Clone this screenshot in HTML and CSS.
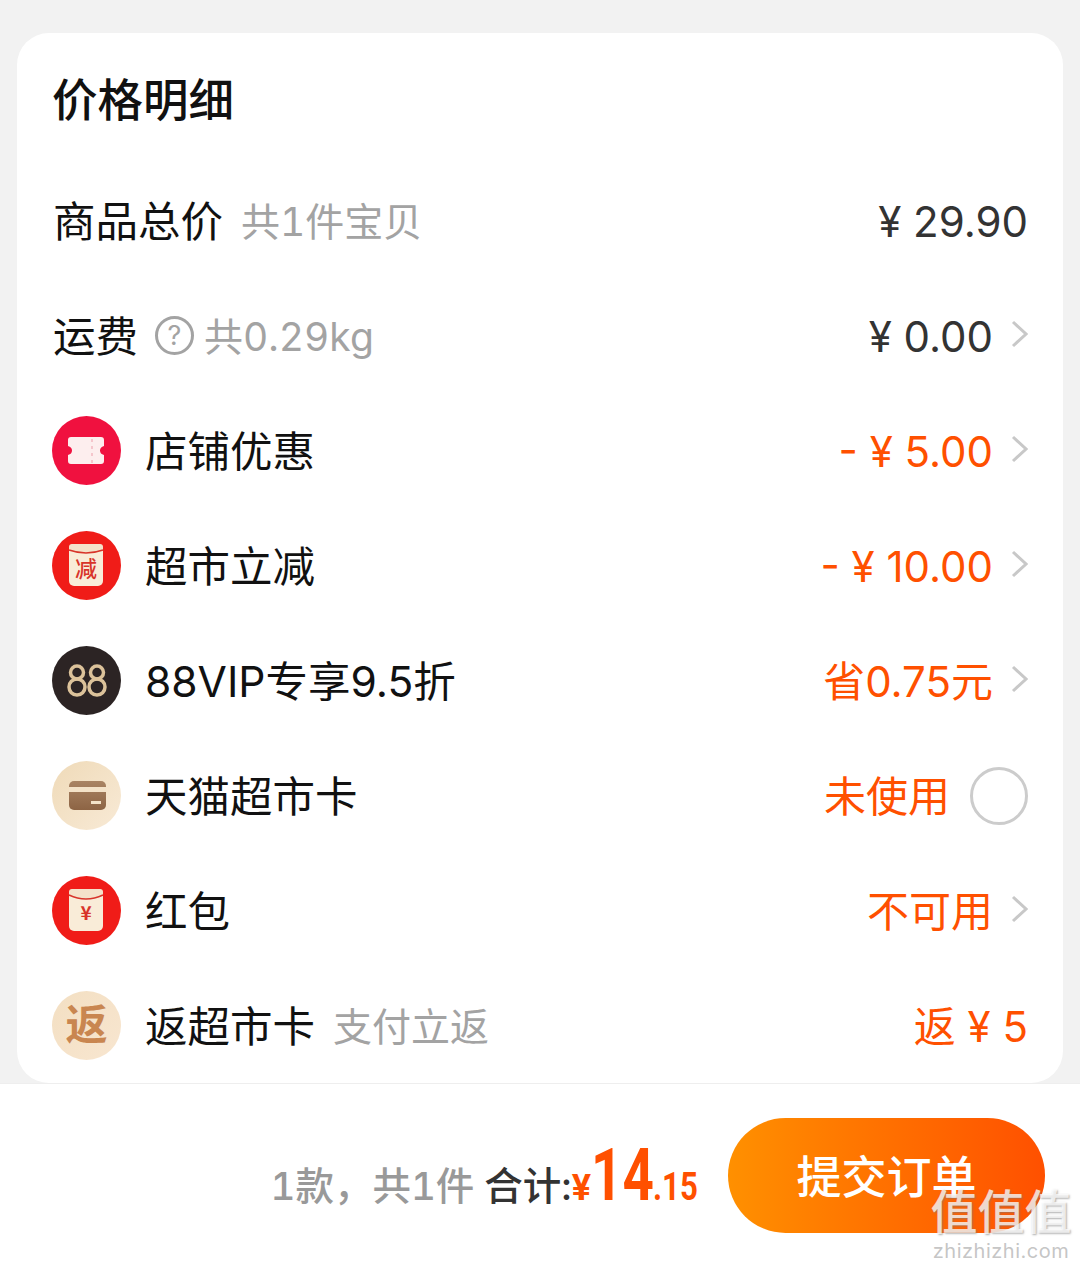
FILE: index.html
```html
<!DOCTYPE html>
<html lang="zh-CN">
<head>
  <meta charset="UTF-8">
  <meta name="viewport" content="width=device-width, initial-scale=1.0">
  <title>价格明细</title>
  <link rel="stylesheet" href="styles.css">
</head>
<body>
  <div class="page">
    <div class="card">
      <h3 class="card-title">价格明细</h3>

      <div class="row">
        <div class="row-left">
          <span class="label">商品总价</span>
          <span class="sub sub-wide">共1件宝贝</span>
        </div>
        <div class="value">¥ 29.90</div>
      </div>

      <div class="row">
        <div class="row-left">
          <span class="label">运费</span>
          <span class="help">?</span>
          <span class="sub sub-tight">共0.29kg</span>
        </div>
        <div class="value">¥ 0.00</div>
        <svg class="chevron" viewBox="0 0 17 28"><path d="M2 2L15 14L2 26"/></svg>
      </div>

      <div class="row">
        <div class="row-left">
          <svg class="icon" viewBox="0 0 69 69">
            <circle cx="34.5" cy="34.5" r="34.5" fill="#f0113f"/>
            <path d="M19 21H49Q52 21 52 24V30Q48 31 48 34.500Q48 38 52 39V45Q52 48 49 48H19Q16 48 16 45V39Q20 38 20 34.500Q20 31 16 30V24Q16 21 19 21Z" fill="#fdeeee"/>
            <path d="M40 23V47" stroke="#f5c6cc" stroke-width="2" stroke-dasharray="3 4"/>
          </svg>
          <span class="label">店铺优惠</span>
        </div>
        <div class="value orange">- ¥ 5.00</div>
        <svg class="chevron" viewBox="0 0 17 28"><path d="M2 2L15 14L2 26"/></svg>
      </div>

      <div class="row">
        <div class="row-left">
          <svg class="icon" viewBox="0 0 69 69">
            <circle cx="34.5" cy="34.5" r="34.5" fill="#f01c18"/>
            <rect x="17" y="13" width="34" height="42" rx="5" fill="#f9ecd8"/>
            <path d="M17 19Q34 25 51 19V16Q51 13 48 13H20Q17 13 17 16Z" fill="#f4e2ca"/>
            <path d="M17 19Q34 25 51 19" fill="none" stroke="#d8342a" stroke-width="1.500"/>
            <text class="icon-char" x="34" y="46" font-size="22" font-weight="500">减</text>
          </svg>
          <span class="label">超市立减</span>
        </div>
        <div class="value orange">- ¥ 10.00</div>
        <svg class="chevron" viewBox="0 0 17 28"><path d="M2 2L15 14L2 26"/></svg>
      </div>

      <div class="row">
        <div class="row-left">
          <svg class="icon" viewBox="0 0 69 69">
            <circle cx="34.5" cy="34.5" r="34.5" fill="#2c2424"/>
            <g fill="none" stroke="#dcc29a" stroke-width="3.500">
              <circle cx="25" cy="26.500" r="6.500"/>
              <circle cx="25" cy="41" r="8"/>
              <circle cx="45" cy="26.500" r="6.500"/>
              <circle cx="45" cy="41" r="8"/>
            </g>
          </svg>
          <span class="label">88VIP专享9.5折</span>
        </div>
        <div class="value orange">省0.75元</div>
        <svg class="chevron" viewBox="0 0 17 28"><path d="M2 2L15 14L2 26"/></svg>
      </div>

      <div class="row">
        <div class="row-left">
          <svg class="icon" viewBox="0 0 69 69">
            <defs>
              <linearGradient id="sand" x1="0" y1="0" x2="1" y2="1">
                <stop offset="0" stop-color="#efdab8"/>
                <stop offset="1" stop-color="#f8ead6"/>
              </linearGradient>
              <linearGradient id="wallet" x1="0" y1="0" x2="0" y2="1">
                <stop offset="0" stop-color="#a98464"/>
                <stop offset="1" stop-color="#8d6444"/>
              </linearGradient>
            </defs>
            <circle cx="34.5" cy="34.5" r="34.5" fill="url(#sand)"/>
            <rect x="17" y="20" width="37" height="29" rx="5" fill="url(#wallet)"/>
            <rect x="17" y="26" width="37" height="5" fill="#f3e2c8"/>
            <rect x="39" y="40" width="10" height="3" fill="#f3e2c8"/>
          </svg>
          <span class="label">天猫超市卡</span>
        </div>
        <div class="value orange">未使用</div>
        <span class="radio"></span>
      </div>

      <div class="row">
        <div class="row-left">
          <svg class="icon" viewBox="0 0 69 69">
            <circle cx="34.5" cy="34.5" r="34.5" fill="#f01c18"/>
            <rect x="17" y="13" width="34" height="42" rx="5" fill="#f9ecd8"/>
            <path d="M17 19Q34 27 51 19V16Q51 13 48 13H20Q17 13 17 16Z" fill="#f4e2ca"/>
            <path d="M17 19Q34 27 51 19" fill="none" stroke="#d8342a" stroke-width="1.500"/>
            <text class="icon-char" x="34" y="44" font-size="19" font-weight="700">¥</text>
          </svg>
          <span class="label">红包</span>
        </div>
        <div class="value orange">不可用</div>
        <svg class="chevron" viewBox="0 0 17 28"><path d="M2 2L15 14L2 26"/></svg>
      </div>

      <div class="row">
        <div class="row-left">
          <div class="icon icon-return">返</div>
          <span class="label">返超市卡</span>
          <span class="sub sub-wide">支付立返</span>
        </div>
        <div class="value orange">返 ¥ 5</div>
      </div>
    </div>

    <div class="footer">
      <div class="totals">
        <span class="count">1款，共1件</span>
        <span class="total-label">合计:</span>
        <span class="price-sign">¥</span>
        <span class="price-big">14</span>
        <span class="price-small">.15</span>
      </div>
      <div class="submit">提交订单</div>
    </div>

    <div class="watermark">
      <div class="watermark-mark">值值值</div>
      <div class="watermark-url">zhizhizhi.com</div>
    </div>
  </div>
</body>
</html>
```

FILE: styles.css
```css
* {
  box-sizing: border-box;
}

body {
  margin: 0;
  background-color: #f2f2f2;
  font-family: Inter, "Noto Sans CJK SC", sans-serif;
  color: #111;
}

.page {
  position: relative;
  width: 1080px;
  height: 1269px;
  padding-top: 33px;
  overflow: hidden;
}

.card {
  height: 1050px;
  margin: 0 17px;
  padding: 0 35px;
  background-color: #fff;
  border-radius: 32px;
  overflow: hidden;
}

.card-title {
  height: 130px;
  margin: 0;
  font-size: 45.5px;
  font-weight: 500;
  line-height: 136px;
}

.row {
  display: flex;
  align-items: center;
  height: 115px;
}

.row-left {
  display: flex;
  align-items: center;
  flex-grow: 1;
}

.row-left > .label:first-child {
  margin-left: 1px;
}

.icon {
  width: 69px;
  height: 69px;
  flex-shrink: 0;
  margin-right: 24px;
}

.icon-char {
  font-family: "Noto Sans CJK SC", sans-serif;
  text-anchor: middle;
  fill: #d8342a;
}

.icon-return {
  border-radius: 50%;
  background: linear-gradient(135deg, #f3dfc2, #f8e6d0);
  color: #c98650;
  font-size: 42px;
  font-weight: 700;
  line-height: 67px;
  text-align: center;
}

.label {
  padding-top: 2px;
  font-size: 42.5px;
  line-height: 56px;
}

.sub {
  padding-top: 2px;
  font-size: 39px;
  font-variant-numeric: tabular-nums;
  line-height: 56px;
  color: #a3a3a3;
}

.sub-wide {
  margin-left: 18px;
}

.sub-tight {
  margin-left: 10px;
}

.help {
  width: 39px;
  height: 39px;
  margin-left: 17px;
  border: 3px solid #a3a3a3;
  border-radius: 50%;
  color: #a3a3a3;
  font-size: 27px;
  line-height: 33px;
  text-align: center;
}

.value {
  padding-top: 2px;
  font-size: 42px;
  line-height: 56px;
  color: #333;
  white-space: nowrap;
}

.orange {
  color: #ff5000;
}

.chevron {
  width: 17px;
  height: 28px;
  margin-left: 18px;
  flex-shrink: 0;
  margin-top: -3px;
}

.chevron path {
  fill: none;
  stroke: #c8c8c8;
  stroke-width: 3;
}

.radio {
  width: 58px;
  height: 58px;
  margin-left: 20px;
  border: 3px solid #ccc;
  border-radius: 50%;
  flex-shrink: 0;
}

.footer {
  display: flex;
  align-items: flex-start;
  justify-content: flex-end;
  height: 186px;
  padding: 34px 35px 0 0;
  background-color: #fff;
  border-top: 1px solid #eee;
}

.totals {
  display: flex;
  align-items: baseline;
  margin-top: 15px;
  margin-right: 32px;
}

.count,
.total-label {
  font-size: 38.5px;
  font-variant-numeric: tabular-nums;
}

.count {
  color: #999;
  font-weight: 500;
}

.total-label {
  margin-left: 10px;
  color: #333;
  font-weight: 500;
}

.price-sign,
.price-big,
.price-small {
  color: #ff5000;
  font-family: Roboto, "Noto Sans CJK SC", sans-serif;
  font-weight: 700;
}

.price-sign {
  font-size: 36px;
}

.price-big {
  width: 62px;
  font-size: 73px;
  line-height: 84px;
  transform: scaleX(0.75);
  transform-origin: left;
}

.price-small {
  width: 43px;
  font-size: 38px;
  transform: scaleX(0.82);
  transform-origin: left;
}

.submit {
  width: 317px;
  height: 115px;
  border-radius: 58px;
  background: linear-gradient(90deg, #ff9000, #ff5000);
  color: #fff;
  font-size: 45px;
  font-weight: 500;
  line-height: 119px;
  text-align: center;
}

.watermark {
  position: absolute;
  right: 8px;
  bottom: 8px;
  width: 142px;
  text-align: center;
  color: rgba(255, 255, 255, 0.75);
}

.watermark-mark {
  font-size: 47px;
  font-weight: 500;
  line-height: 46px;
  text-shadow: 1px 1px 2px rgba(120, 120, 120, 0.6);
  white-space: nowrap;
}

.watermark-url {
  margin-top: 6px;
  font-size: 20px;
  line-height: 20px;
  color: rgba(190, 190, 190, 0.9);
  letter-spacing: 0.5px;
}
```
